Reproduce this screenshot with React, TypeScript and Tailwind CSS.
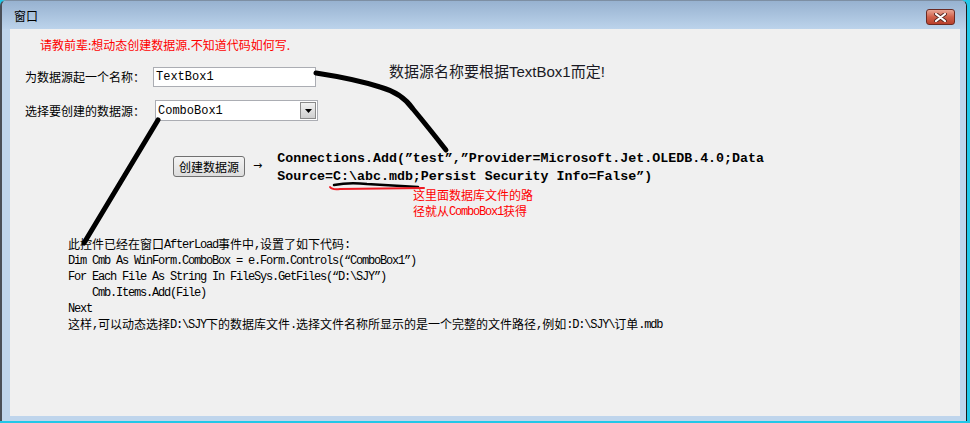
import React from "react";

const cjk = "font-['Noto_Sans_CJK_SC',sans-serif]";
const mono = "font-['Liberation_Mono','Noto_Sans_CJK_SC',monospace]";

// latin runs are drawn half-width, like the bitmap font in the form
function Mixed({ text }: { text: string }) {
  const parts = text.split(/([\u0020-\u00ff\u2018-\u201d]+)/);
  return (
    <>
      {parts.map((p, i) =>
        i % 2 === 1 ? (
          <span
            key={i}
            className="inline-block align-top h-[16px] pt-[2px] font-['Liberation_Mono',monospace] text-[12px] tracking-[-1.2px] leading-[14px]"
          >
            {p}
          </span>
        ) : (
          <span key={i} className="inline-block align-top h-[16px] leading-[16px]">
            {p}
          </span>
        )
      )}
    </>
  );
}

const codeLines = [
  "此控件已经在窗口AfterLoad事件中,设置了如下代码:",
  "Dim Cmb As WinForm.ComboBox = e.Form.Controls(“ComboBox1”)",
  "For Each File As String In FileSys.GetFiles(“D:\\SJY”)",
  "    Cmb.Items.Add(File)",
  "Next",
  "这样,可以动态选择D:\\SJY下的数据库文件.选择文件名称所显示的是一个完整的文件路径,例如:D:\\SJY\\订单.mdb",
];

export default function App() {
  return (
    <div className="w-[970px] h-[423px] bg-[#22c7e8] overflow-hidden">
      <div className="w-[967px] h-[421px] flex flex-col bg-[#bfd5ec] border-l-2 border-l-[#4a4f57] border-r border-r-[#1a1a1a] border-t border-t-[#7d8fa3] rounded-t-[6px] overflow-hidden">
        {/* Title bar */}
        <div className="h-[28px] shrink-0 flex items-start justify-between bg-linear-to-b from-[#97b2d0] to-[#bcd3eb] pl-[12px] pr-[11px]">
          <span className={`${cjk} text-[12px] leading-[14px] mt-[8px] text-black`}>窗口</span>
          <button className="mt-[8px] w-[29px] h-[16px] rounded-[3px] border border-[#6b2a22] bg-linear-to-b from-[#e8a595] via-[#d0604a] to-[#b8402c] flex items-center justify-center">
            <svg width="13" height="9" viewBox="0 0 13 9">
              <path d="M2 1 L11 8 M11 1 L2 8" stroke="#5a2a24" strokeWidth="4" strokeLinecap="round" />
              <path d="M2 1 L11 8 M11 1 L2 8" stroke="#ffffff" strokeWidth="2.2" strokeLinecap="round" />
            </svg>
          </button>
        </div>

        {/* Client area */}
        <div className="relative flex-1 ml-[8px] mr-[6px] mb-[5px] bg-[#f0f0f0] flex flex-col">
          <div className={`${cjk} ml-[30px] mt-[9px] text-[12px] leading-[14px] text-[#ff0000]`}>
            请教前辈:想动态创建数据源.不知道代码如何写.
          </div>

          {/* TextBox row */}
          <div className="flex items-center mt-[15px] pl-[15px]">
            <span className={`${cjk} w-[128px] text-[12px] leading-[14px] text-black`}>为数据源起一个名称：</span>
            <div className={`${mono} w-[163px] h-[20px] border border-[#abadb3] bg-white pl-[2px] text-[12px] leading-[18px] text-black`}>
              TextBox1
            </div>
            <span className="self-start -mt-[4px] ml-[73px] font-['Liberation_Sans','Noto_Sans_CJK_SC',sans-serif] text-[15px] leading-[18px] text-[#1a1a24]">
              数据源名称要根据TextBox1而定!
            </span>
          </div>

          {/* ComboBox row */}
          <div className="flex items-center mt-[13px] pl-[15px]">
            <span className={`${cjk} w-[130px] text-[12px] leading-[14px] text-black`}>选择要创建的数据源：</span>
            <div className="w-[163px] h-[21px] border border-[#abadb3] bg-white flex items-center justify-between pl-[2px] pr-[1px]">
              <span className={`${mono} text-[12px] leading-[18px] text-black`}>ComboBox1</span>
              <div className="w-[16px] h-[17px] border border-[#8a8a8a] bg-linear-to-b from-[#f2f2f2] to-[#cfcfcf] flex items-center justify-center">
                <svg width="7" height="4" viewBox="0 0 7 4">
                  <path d="M0 0 H7 L3.5 4 Z" fill="#000" />
                </svg>
              </div>
            </div>
          </div>

          {/* Button + code row */}
          <div className="flex items-start mt-[29px]">
            <button className={`${cjk} ml-[163px] mt-[6px] w-[72px] h-[21px] rounded-[3px] border border-[#707070] bg-linear-to-b from-[#f4f4f4] to-[#dcdcdc] text-[12px] leading-[14px] text-black`}>
              创建数据源
            </button>
            <span className="ml-[8px] mt-[8px] font-['DejaVu_Sans',sans-serif] text-[11px] leading-[16px] text-black">→</span>
            <div className="ml-[15px] font-['Liberation_Mono',monospace] font-bold text-[13.3px] leading-[18px] text-black whitespace-pre">
              <div>Connections.Add(”test”,”Provider=Microsoft.Jet.OLEDB.4.0;Data</div>
              <div>Source=C:\abc.mdb;Persist Security Info=False”)</div>
            </div>
          </div>

          <div className={`${cjk} ml-[403px] mt-[1px] text-[12px] leading-[16px] text-[#ff0000]`}>
            <div className="h-[16px]">这里面数据库文件的路</div>
            <div className="h-[16px]">
              <Mixed text="径就从ComboBox1获得" />
            </div>
          </div>

          <div className={`${cjk} ml-[58px] mt-[17px] text-[12px] leading-[16px] text-black whitespace-pre`}>
            {codeLines.map((l, i) => (
              <div key={i} className="h-[16px]">
                <Mixed text={l} />
              </div>
            ))}
          </div>

          {/* hand-drawn marks */}
          <svg className="absolute inset-0 pointer-events-none" width="950" height="387">
            <path
              d="M306 44 Q 345 50 370 58 Q 392 64 403 80 Q 418 98 436 121"
              fill="none"
              stroke="#000"
              strokeWidth="5"
              strokeLinecap="round"
            />
            <path d="M148 91 L74 214" fill="none" stroke="#000" strokeWidth="5" strokeLinecap="round" />
            <path d="M324 156 Q 339 153 357 155 L 408 158" fill="none" stroke="#000" strokeWidth="2.5" strokeLinecap="round" />
            <path d="M320 158 Q 322 161 330 160 L 414 159" fill="none" stroke="#ee1c24" strokeWidth="2" strokeLinecap="round" />
          </svg>
        </div>
      </div>
    </div>
  );
}
